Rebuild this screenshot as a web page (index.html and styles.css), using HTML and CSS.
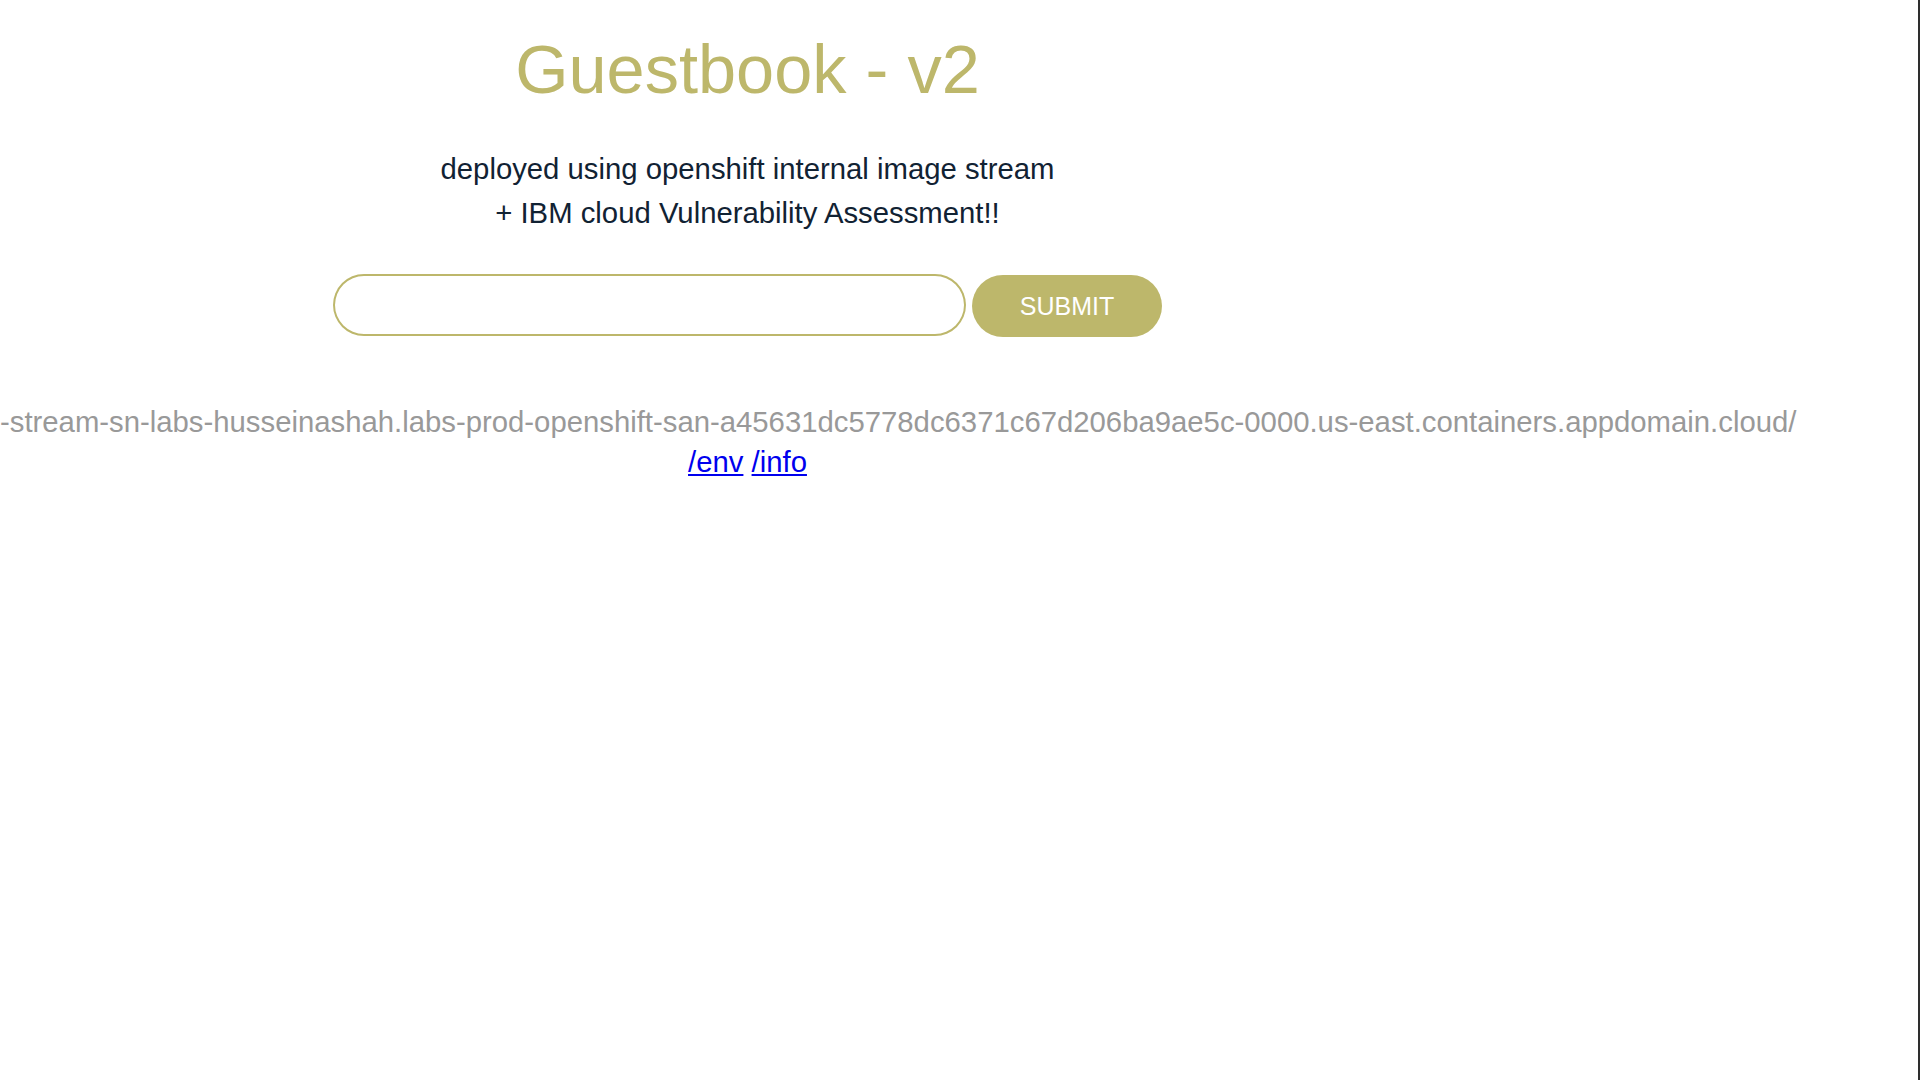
FILE: index.html
```html
<!DOCTYPE html>
<html lang="en">
<head>
<meta charset="utf-8">
<title>Guestbook - v2</title>
<link rel="stylesheet" href="styles.css">
</head>
<body>
<div class="window">
  <main class="page">
    <header class="header">
      <h1 class="title">Guestbook - v2</h1>
    </header>
    <section class="entries">
      <p class="entry">deployed using openshift internal image stream<br>+ IBM cloud Vulnerability Assessment!!</p>
    </section>
    <section class="form-wrap">
      <form class="guest-form">
        <input class="entry-input" type="text" autocomplete="off">
        <a class="submit" href="#">Submit</a>
      </form>
    </section>
    <section class="host">
      <h2 class="host-name">-stream-sn-labs-husseinashah.labs-prod-openshift-san-a45631dc5778dc6371c67d206ba9ae5c-0000.us-east.containers.appdomain.cloud/</h2>
      <p class="links"><a href="env">/env</a> <a href="info">/info</a></p>
    </section>
  </main>
</div>
</body>
</html>
```

FILE: styles.css
```css
html, body {
  margin: 0;
  padding: 0;
  background: #ffffff;
}

body {
  font-family: "Liberation Sans", Arial, sans-serif;
  color: #112233;
}

.window {
  box-sizing: border-box;
  width: 1920px;
  height: 1080px;
  border-right: 2px solid #2e2e2e;
  overflow: hidden;
  background: #ffffff;
}

.page {
  width: 1495px;
  display: flex;
  flex-direction: column;
  align-items: stretch;
  text-align: center;
}

.header {
  padding-top: 30px;
}

.title {
  margin: 0;
  font-size: 68.5px;
  line-height: 80px;
  font-weight: 400;
  color: #BDB76B;
}

.entries {
  padding-top: 37px;
}

.entry {
  margin: 0;
  font-size: 29.3px;
  line-height: 44px;
  color: #112233;
}

.form-wrap {
  padding-top: 38px;
}

.guest-form {
  display: flex;
  justify-content: center;
  align-items: center;
  gap: 6px;
}

.entry-input {
  box-sizing: border-box;
  width: 633px;
  height: 62px;
  border: 0;
  border-radius: 1000px;
  box-shadow: inset 0 0 0 2px #BDB76B;
  outline: none;
  padding: 0 30px;
  font-family: inherit;
  font-size: 29px;
  background: #ffffff;
}

.submit {
  box-sizing: border-box;
  width: 190px;
  height: 62px;
  display: flex;
  align-items: center;
  justify-content: center;
  background: #BDB76B;
  border-radius: 1000px;
  color: #ffffff;
  font-size: 25px;
  text-transform: uppercase;
  text-decoration: none;
  margin-top: 2px;
}

.host {
  padding-top: 65px;
}

.host-name {
  margin: 0;
  font-size: 29.3px;
  line-height: 40px;
  font-weight: 400;
  color: #999999;
  white-space: nowrap;
  text-align: left;
}

.links {
  margin: 0;
  font-size: 29.3px;
  line-height: 40px;
}

.links a {
  color: #0000EE;
}
```
